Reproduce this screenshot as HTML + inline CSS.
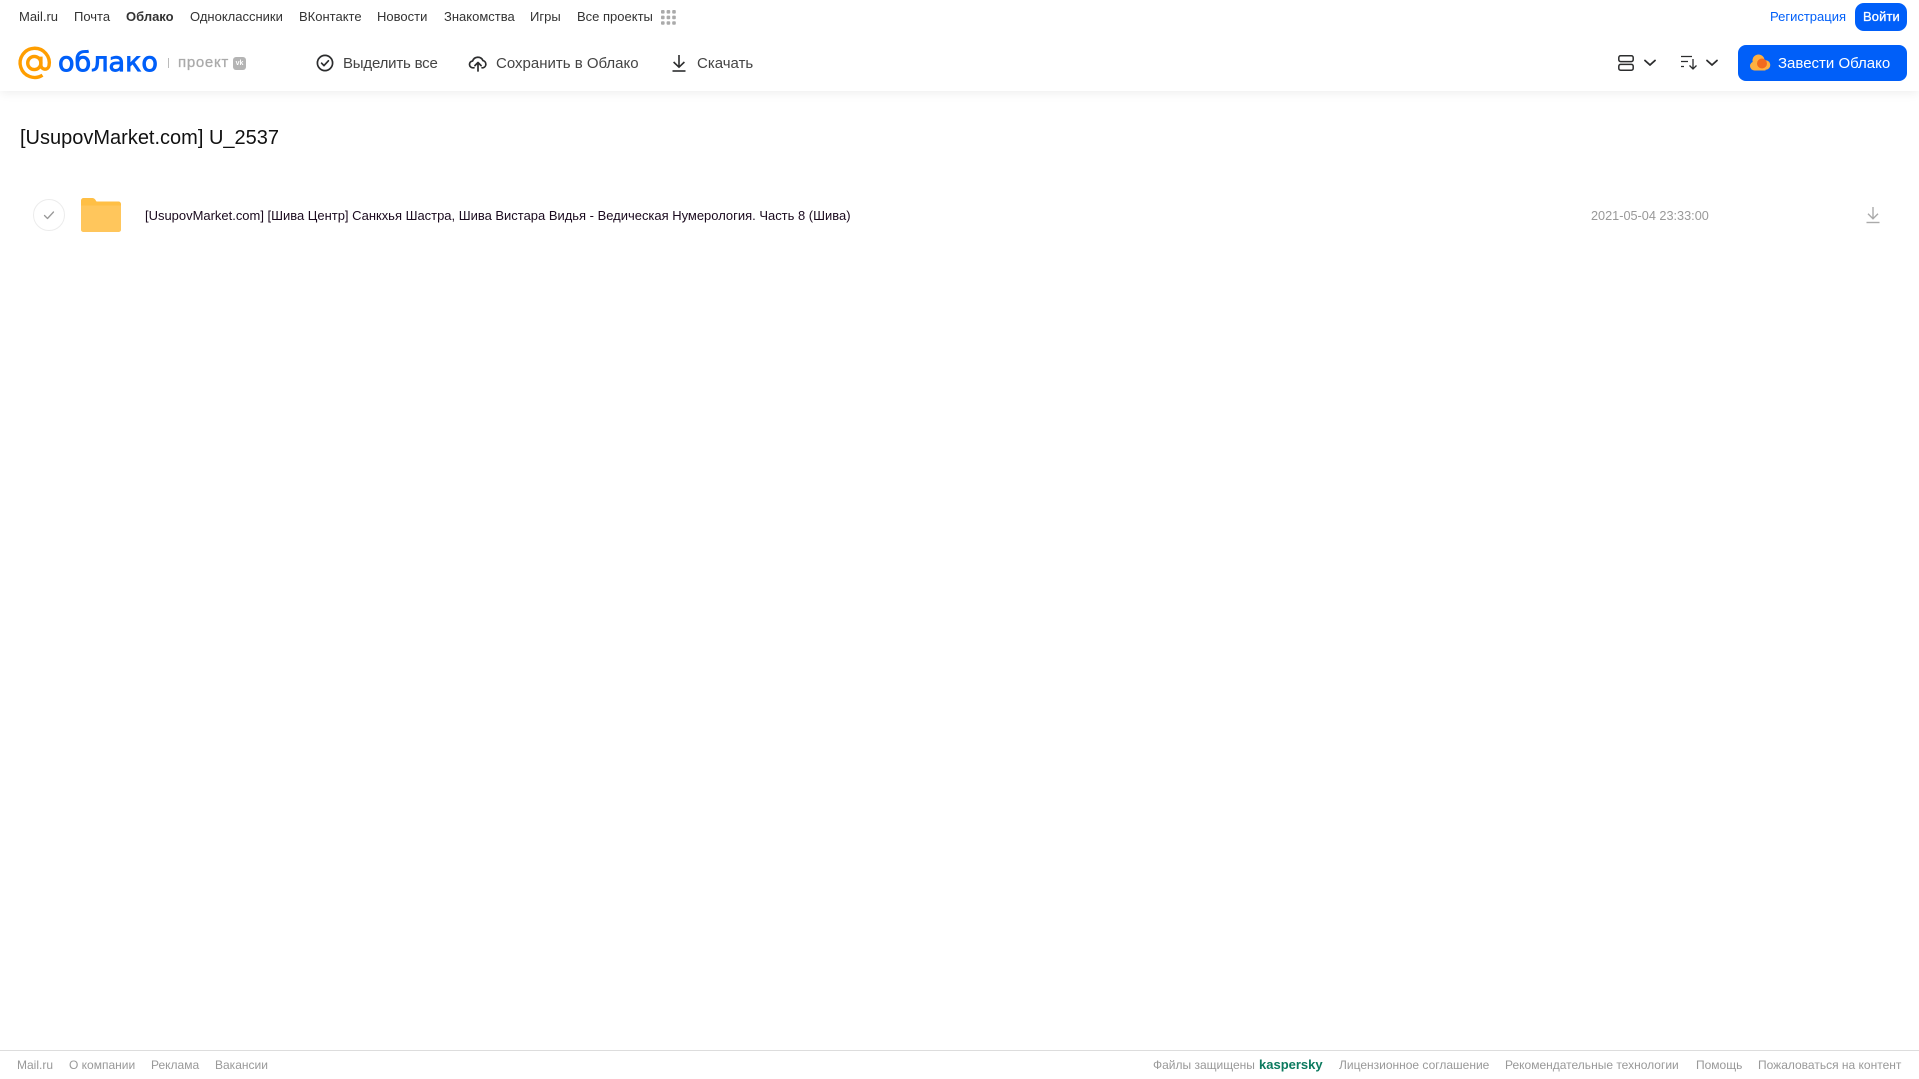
<!DOCTYPE html>
<html lang="ru">
<head>
<meta charset="utf-8">
<title>Облако</title>
<style>
html,body{margin:0;padding:0;background:#fff;width:1919px;height:1079px;overflow:hidden}
body{font-family:"Liberation Sans",sans-serif;position:relative}
.t{position:absolute;white-space:nowrap;line-height:20px;height:20px}
.n{font-size:13px;color:#333;top:7px}
.a{font-size:15px;color:#444;top:54px}
.f{font-size:12px;color:#999;top:1055px}
svg{position:absolute;overflow:visible}
#hdr{position:absolute;left:0;top:0;width:1919px;height:91px;background:#fff;box-shadow:0 2px 10px rgba(0,0,0,.07)}
</style>
</head>
<body>
<div id="hdr"></div>

<span class="t n" style="left:19px">Mail.ru</span>
<span class="t n" style="left:74px">Почта</span>
<span class="t n" style="left:126px;font-weight:bold">Облако</span>
<span class="t n" style="left:190px">Одноклассники</span>
<span class="t n" style="left:299px">ВКонтакте</span>
<span class="t n" style="left:377px">Новости</span>
<span class="t n" style="left:444px">Знакомства</span>
<span class="t n" style="left:530px">Игры</span>
<span class="t n" style="left:577px">Все проекты</span>
<svg style="left:661px;top:10px" width="15" height="15" fill="#aaa">
<rect x="0" y="0" width="3.6" height="3.6" rx="1"/><rect x="5.6" y="0" width="3.6" height="3.6" rx="1"/><rect x="11.2" y="0" width="3.6" height="3.6" rx="1"/>
<rect x="0" y="5.6" width="3.6" height="3.6" rx="1"/><rect x="5.6" y="5.6" width="3.6" height="3.6" rx="1"/><rect x="11.2" y="5.6" width="3.6" height="3.6" rx="1"/>
<rect x="0" y="11.2" width="3.6" height="3.6" rx="1"/><rect x="5.6" y="11.2" width="3.6" height="3.6" rx="1"/><rect x="11.2" y="11.2" width="3.6" height="3.6" rx="1"/>
</svg>

<span class="t n" style="left:1770px;color:#005ff9">Регистрация</span>
<div style="position:absolute;left:1855px;top:3px;width:52px;height:28px;border-radius:9px;background:#005ff9"></div>
<span class="t n" style="left:1863px;color:#fff;font-size:13px;-webkit-text-stroke:.3px #fff;letter-spacing:.1px">Войти</span>

<!-- logo -->
<svg style="left:18px;top:47px" width="33" height="33" viewBox="0 0 33 33" fill="none" stroke="#ff9e00" stroke-width="3.4">
<circle cx="16.3" cy="16" r="6.6"/>
<path d="M22.9 9.6V18.5a4.1 4.1 0 0 0 8.1 .3A14.6 14.6 0 1 0 24.5 28.2"/>
</svg>
<svg style="left:56px;top:44px" width="106" height="36">
<text x="2" y="27" font-family="'DejaVu Sans',sans-serif" font-size="27" fill="#005ff9" stroke="#005ff9" stroke-width=".9" textLength="100" lengthAdjust="spacingAndGlyphs">облако</text>
</svg>
<div style="position:absolute;left:168px;top:58px;width:1px;height:10px;background:#bbb"></div>
<span class="t" style="left:178px;top:53px;font-size:15px;color:#aaa;letter-spacing:.7px;-webkit-text-stroke:.3px #aaa">проект</span>
<div style="position:absolute;left:233px;top:57px;width:13px;height:13px;border-radius:3px;background:#b4b4b4;color:#fff;font-size:7px;font-weight:bold;line-height:13px;text-align:center">vk</div>

<!-- toolbar -->
<svg style="left:316px;top:54px" width="18" height="18" fill="none" stroke="#2c2d2e" stroke-width="1.7">
<circle cx="9" cy="9" r="7.6"/><path d="M5.6 9.2l2.4 2.4 4.4-4.8" stroke-linecap="round" stroke-linejoin="round"/>
</svg>
<span class="t a" style="left:343px;letter-spacing:-.2px">Выделить все</span>

<svg style="left:469px;top:54px" width="18" height="18" fill="none" stroke="#2c2d2e" stroke-width="1.7" stroke-linecap="round" stroke-linejoin="round">
<path d="M5 13.8H4.2A3.4 3.4 0 0 1 3.6 7 5.6 5.6 0 0 1 14 6.6a3.7 3.7 0 0 1 0 7.2H13"/>
<path d="M9 17V9M5.9 11.6L9 8.5l3.1 3.1"/>
</svg>
<span class="t a" style="left:496px">Сохранить в Облако</span>

<svg style="left:671px;top:54px" width="16" height="18" fill="none" stroke="#2c2d2e" stroke-width="1.6">
<path d="M8 1v12M2.6 8L8 13.2 13.4 8"/><path d="M1.5 17h13"/>
</svg>
<span class="t a" style="left:697px">Скачать</span>

<svg style="left:1618px;top:55px" width="16" height="16" fill="none" stroke="#2c2d2e" stroke-width="1.5">
<rect x=".8" y=".8" width="14.4" height="5.8" rx="1.8"/><rect x=".8" y="9.4" width="14.4" height="5.8" rx="1.8"/>
</svg>
<svg style="left:1644px;top:59px" width="12" height="8" fill="none" stroke="#2c2d2e" stroke-width="1.8" stroke-linecap="round" stroke-linejoin="round">
<path d="M1 1.5l5 4.5 5-4.5"/>
</svg>
<svg style="left:1681px;top:55px" width="16" height="16" fill="none" stroke="#2c2d2e" stroke-width="1.3">
<path d="M0 1.5h11M0 6.5h7M0 11.5h3"/><path d="M12 4v10M8.5 10.5L12 14l3.5-3.5"/>
</svg>
<svg style="left:1706px;top:59px" width="12" height="8" fill="none" stroke="#2c2d2e" stroke-width="1.8" stroke-linecap="round" stroke-linejoin="round">
<path d="M1 1.5l5 4.5 5-4.5"/>
</svg>

<div style="position:absolute;left:1738px;top:45px;width:169px;height:36px;border-radius:8px;background:#005ff9"></div>
<svg style="left:1750px;top:54px" width="20" height="17">
<circle cx="8.5" cy="6.5" r="6" fill="#ffb040"/>
<circle cx="4.5" cy="12" r="4.5" fill="#ffb040"/>
<circle cx="15.5" cy="11" r="4.8" fill="#ffb040"/>
<rect x="4.5" y="8" width="11" height="8.5" fill="#ffb040"/>
<circle cx="12" cy="9.5" r="5" fill="#f26a1e"/>
</svg>
<span class="t a" style="left:1778px;color:#fff">Завести Облако</span>

<!-- title -->
<span class="t" style="left:20px;top:126px;font-size:20px;line-height:24px;height:24px;color:#111">[UsupovMarket.com] U_2537</span>

<!-- row -->
<div style="position:absolute;left:33px;top:199px;width:30px;height:30px;border:1px solid #ececec;border-radius:50%"></div>
<svg style="left:43px;top:210px" width="12" height="10" fill="none" stroke="#999" stroke-width="1.3" stroke-linecap="round" stroke-linejoin="round">
<path d="M1.5 5.5l3 3 6-6.5"/>
</svg>
<svg style="left:81px;top:198px" width="40" height="34">
<path d="M0 2.5A2.500 2.500 0 0 1 2.500 0h9a3 3 0 0 1 2.500 1.300L15.500 3.500h22a2.500 2.500 0 0 1 2.500 2.500v25.500a2.500 2.500 0 0 1-2.500 2.500H2.500a2.500 2.500 0 0 1-2.500-2.500Z" fill="#ffbf45"/>
<path d="M0 7.500h40v24a2.500 2.500 0 0 1-2.500 2.500H2.500a2.500 2.500 0 0 1-2.500-2.500Z" fill="#ffc65c"/>
</svg>
<span class="t" style="left:145px;top:206px;font-size:12.97px;color:#1a0a1e">[UsupovMarket.com] [Шива Центр] Санкхья Шастра, Шива Вистара Видья - Ведическая Нумерология. Часть 8 (Шива)</span>
<span class="t" style="left:1591px;top:206px;font-size:12.7px;color:#999">2021-05-04 23:33:00</span>
<svg style="left:1866px;top:206px" width="14" height="18" fill="none" stroke="#aaa" stroke-width="1.4">
<path d="M7 1v11.500M2 7.800L7 12.800 12 7.800"/><path d="M.5 16.500h13"/>
</svg>

<!-- footer -->
<div style="position:absolute;left:0;top:1050px;width:1919px;height:1px;background:#ddd"></div>
<span class="t f" style="left:17px">Mail.ru</span>
<span class="t f" style="left:69px">О компании</span>
<span class="t f" style="left:151px">Реклама</span>
<span class="t f" style="left:215px">Вакансии</span>
<span class="t f" style="left:1153px">Файлы защищены</span>
<span class="t f" style="left:1259px;color:#0c7a5f;font-weight:bold;font-size:13px">kaspersky</span>
<span class="t f" style="left:1339px">Лицензионное соглашение</span>
<span class="t f" style="left:1505px">Рекомендательные технологии</span>
<span class="t f" style="left:1696px">Помощь</span>
<span class="t f" style="left:1758px">Пожаловаться на контент</span>
</body>
</html>
